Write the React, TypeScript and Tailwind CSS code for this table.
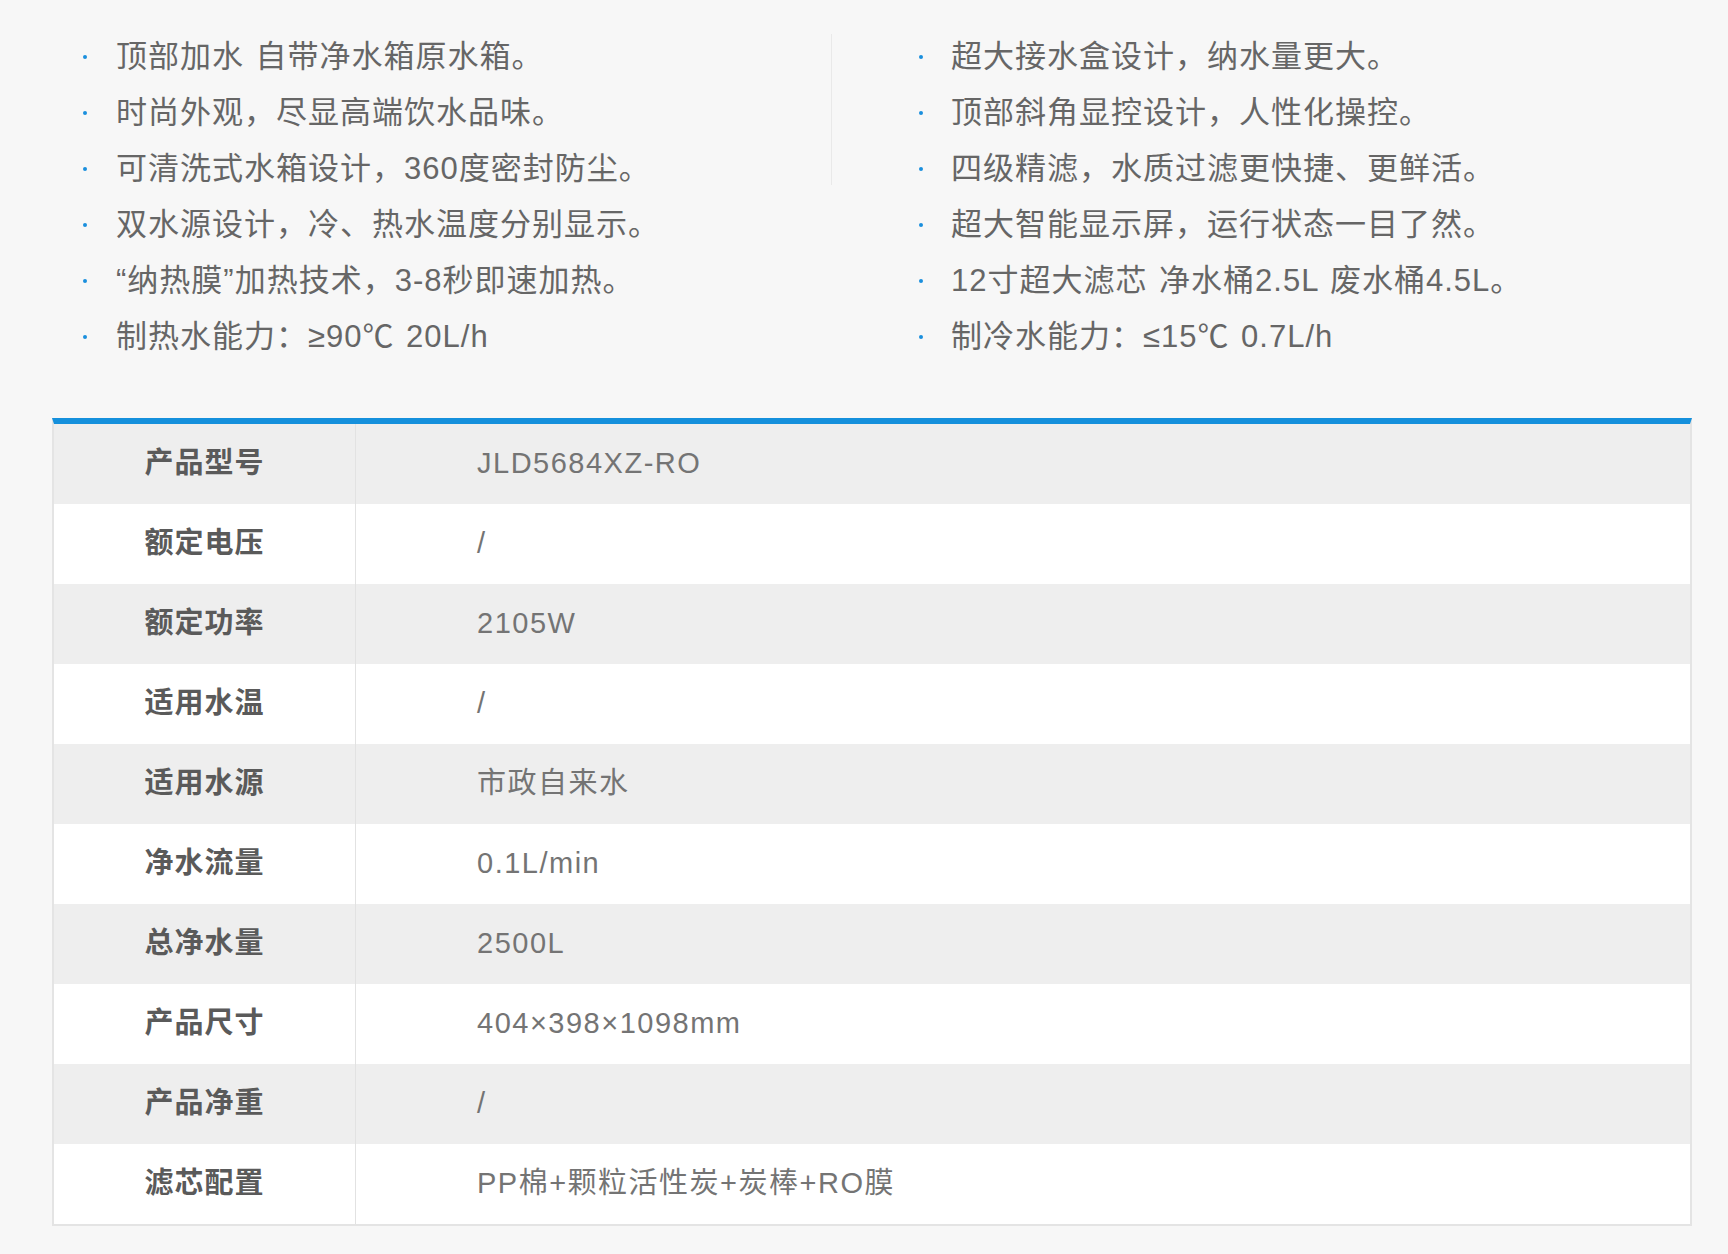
const leftFeatures = [
  '顶部加水 自带净水箱原水箱。',
  '时尚外观，尽显高端饮水品味。',
  '可清洗式水箱设计，360度密封防尘。',
  '双水源设计，冷、热水温度分别显示。',
  '“纳热膜”加热技术，3-8秒即速加热。',
  '制热水能力：≥90℃ 20L/h',
];

const rightFeatures = [
  '超大接水盒设计，纳水量更大。',
  '顶部斜角显控设计，人性化操控。',
  '四级精滤，水质过滤更快捷、更鲜活。',
  '超大智能显示屏，运行状态一目了然。',
  '12寸超大滤芯 净水桶2.5L 废水桶4.5L。',
  '制冷水能力：≤15℃ 0.7L/h',
];

const specs: [string, string][] = [
  ['产品型号', 'JLD5684XZ-RO'],
  ['额定电压', '/'],
  ['额定功率', '2105W'],
  ['适用水温', '/'],
  ['适用水源', '市政自来水'],
  ['净水流量', '0.1L/min'],
  ['总净水量', '2500L'],
  ['产品尺寸', '404×398×1098mm'],
  ['产品净重', '/'],
  ['滤芯配置', 'PP棉+颗粒活性炭+炭棒+RO膜'],
];

const font = "font-['Liberation_Sans','Noto_Sans_CJK_SC',sans-serif]";

function FeatureList({ items, className, gap }: { items: string[]; className: string; gap: string }) {
  return (
    <ul className={className}>
      {items.map((text) => (
        <li key={text} className="flex items-center h-[56px]">
          <span className={`w-[4px] h-[4px] rounded-full bg-[#1a8fdd] shrink-0 ${gap}`} />
          <span className="text-[31px] tracking-[1px] [word-spacing:2px] text-[#666666] whitespace-nowrap">
            {text}
          </span>
        </li>
      ))}
    </ul>
  );
}

export default function App() {
  return (
    <div className={`min-h-screen bg-[#f7f7f7] pt-[29px] pb-[28px] ${font}`}>
      {/* feature bullets */}
      <div className="flex">
        <FeatureList items={leftFeatures} className="w-[831px] pl-[83px]" gap="mr-[29px]" />
        <div className="w-px h-[151px] mt-[5px] bg-[#e9e9e9]" />
        <FeatureList items={rightFeatures} className="pl-[87px]" gap="mr-[28px]" />
      </div>

      {/* spec table */}
      <div className="ml-[52px] w-[1640px] mt-[53px] border-t-[6px] border-t-[#1590dc] border-x-2 border-x-[#e4e4e4] border-b-2 border-b-[#e4e4e4]">
        {specs.map(([label, value], i) => (
          <div
            key={label}
            className={`flex h-[80px] ${i % 2 === 0 ? 'bg-[#eeeeee]' : 'bg-white'}`}
          >
            <div className="w-[302px] flex items-center justify-center border-r border-[#e2e2e2] text-[29px] tracking-[1px] font-semibold text-[#5a5a5a]">
              {label}
            </div>
            <div className="flex-1 flex items-center pl-[121px] text-[29px] tracking-[1.5px] text-[#747474]">
              {value}
            </div>
          </div>
        ))}
      </div>
    </div>
  );
}
